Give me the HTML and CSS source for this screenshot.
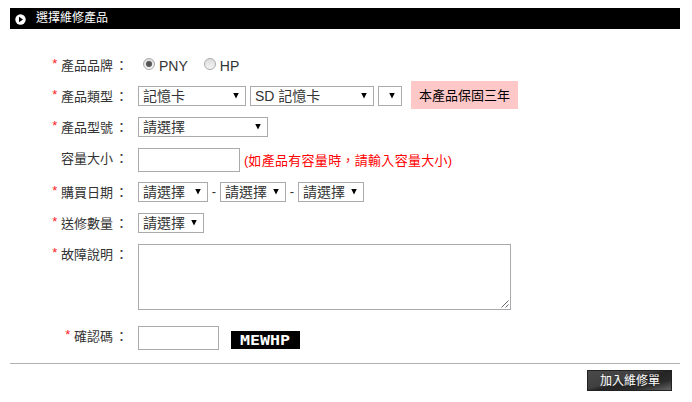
FILE: index.html
```html
<!DOCTYPE html>
<html lang="zh-Hant">
<head>
<meta charset="utf-8">
<title>選擇維修產品</title>
<link rel="stylesheet" href="styles.css">
</head>
<body>
<main class="panel">
  <h1 class="panel-title">
    <svg class="bullet" width="11" height="11" viewBox="0 0 11 11"><circle cx="5.5" cy="5.5" r="5.2" fill="#fff"/><path d="M4 2.8 8 5.5 4 8.2z" fill="#000"/></svg>
    選擇維修產品
  </h1>
  <form class="form">
    <div class="row">
      <div class="label"><span class="req">*</span> 產品品牌<span class="colon">：</span></div>
      <div class="field brands">
        <label class="option"><span class="radio checked"></span>PNY</label>
        <label class="option"><span class="radio"></span>HP</label>
      </div>
    </div>
    <div class="row">
      <div class="label"><span class="req">*</span> 產品類型<span class="colon">：</span></div>
      <div class="field">
        <div class="select w-type">記憶卡</div>
        <div class="select w-sub">SD 記憶卡</div>
        <div class="select w-empty"></div>
        <div class="warranty">本產品保固三年</div>
      </div>
    </div>
    <div class="row">
      <div class="label"><span class="req">*</span> 產品型號<span class="colon">：</span></div>
      <div class="field"><div class="select w-model">請選擇</div></div>
    </div>
    <div class="row row-capacity">
      <div class="label">容量大小<span class="colon">：</span></div>
      <div class="field"><input class="input w-capacity" type="text"><span class="note">(<span class="note-text">如產品有容量時，請輸入容量大小</span>)</span></div>
    </div>
    <div class="row">
      <div class="label"><span class="req">*</span> 購買日期<span class="colon">：</span></div>
      <div class="field dates">
        <div class="select w-year">請選擇</div><span class="dash">-</span>
        <div class="select w-pick">請選擇</div><span class="dash">-</span>
        <div class="select w-pick">請選擇</div>
      </div>
    </div>
    <div class="row">
      <div class="label"><span class="req">*</span> 送修數量<span class="colon">：</span></div>
      <div class="field"><div class="select w-pick">請選擇</div></div>
    </div>
    <div class="row row-desc">
      <div class="label"><span class="req">*</span> 故障說明<span class="colon">：</span></div>
      <div class="field desc">
        <textarea class="textarea"></textarea>
        <svg class="grip" width="8" height="8" viewBox="0 0 8 8"><path d="M.5 7.5l7-7M4.5 7.5l3-3" stroke="#666" stroke-width="1" fill="none"/></svg>
      </div>
    </div>
    <div class="row row-code">
      <div class="label"><span class="req">*</span> 確認碼<span class="colon">：</span></div>
      <div class="field"><input class="input w-code" type="text"><svg class="captcha" width="69" height="18" viewBox="0 0 69 18"><rect width="69" height="18" fill="#000"/><text x="9" y="14" textLength="50" lengthAdjust="spacingAndGlyphs">MEWHP</text></svg></div>
    </div>
  </form>
  <div class="actions"><button class="submit" type="button">加入維修單</button></div>
</main>
</body>
</html>
```
FILE: styles.css
```css
* { box-sizing: border-box; }
body {
  margin: 0;
  background: #fff;
  color: #333;
  font: 13px/20px "Liberation Sans", "Noto Sans CJK TC", sans-serif;
}
.panel { width: 670px; margin: 8px 0 0 10px; }
.panel-title {
  display: flex;
  align-items: center;
  gap: 10px;
  height: 21px;
  margin: 0;
  padding: 0 0 1px 5px;
  background: #000;
  color: #fff;
  font-size: 12px;
  font-weight: 400;
}
.bullet { margin-top: 2px; }
.form { padding-top: 20px; border-bottom: 1px solid #b0b0b0; }
.row {
  display: grid;
  grid-template-columns: 116px 1fr;
  column-gap: 12px;
  height: 31px;
  padding-top: 6px;
  align-items: start;
}
.row-capacity { height: 34px; }
.row-desc { height: 82px; }
.row-code { height: 43px; }
.label { text-align: right; white-space: nowrap; line-height: 22px; }
.req { color: #f22; position: relative; top: -2px; }
.colon { position: relative; left: 2px; }
.field { display: flex; align-items: flex-start; gap: 4px; }
.brands { gap: 16px; }
.option { display: flex; align-items: center; font-size: 14px; line-height: 22px; }
.radio {
  display: grid;
  place-items: center;
  width: 12px;
  height: 12px;
  margin: 0 4px 4px 5px;
  border: 1px solid #aaa;
  border-radius: 50%;
  background: linear-gradient(#ddd, #f4f4f4);
}
.brands .option + .option .radio { margin-left: 0; }
.checked::after {
  content: "";
  width: 6px;
  height: 6px;
  border-radius: 50%;
  background: #555;
}
.select {
  display: flex;
  justify-content: space-between;
  align-items: center;
  height: 20px;
  padding: 0 6px 0 4px;
  border: 1px solid #a9a9ae;
  background: #fff;
  font-size: 14px;
  line-height: 20px;
  white-space: nowrap;
}
.select::after {
  content: "";
  width: 6px;
  height: 6px;
  margin: 0 0 1px auto;
  background: #000;
  clip-path: polygon(0 0, 100% 0, 50% 100%);
}
.w-type { width: 108px; }
.w-sub { width: 124px; }
.w-empty { width: 24px; }
.w-model { width: 130px; }
.w-year { width: 70px; }
.w-pick { width: 66px; }
.w-capacity { width: 102px; }
.w-code { width: 81px; }
.warranty {
  width: 107px;
  height: 28px;
  margin: -5px 0 0 5px;
  padding-left: 8px;
  background: #ffc8c8;
  color: #000;
  line-height: 29px;
}
.input {
  height: 24px;
  margin: 0;
  padding: 0 4px;
  border: 1px solid #a9a9ae;
  background: #fff;
}
.note { color: #f00; line-height: 26px; white-space: nowrap; }
.note-text { letter-spacing: 0.3px; }
.dates { gap: 0; }
.dash { width: 12px; text-align: center; }
.desc { position: relative; width: 373px; }
.textarea {
  width: 373px;
  height: 66px;
  margin: 0;
  border: 1px solid #a9a9ae;
  background: #fff;
  resize: none;
}
.grip { position: absolute; right: 2px; bottom: 2px; }
.captcha { margin: 5px 0 0 8px; }
.captcha text { fill: #fff; font: 700 14px "DejaVu Sans Mono", monospace; }
.actions { display: flex; justify-content: flex-end; padding: 6px 8px 0 0; }
.submit {
  width: 85px;
  height: 21px;
  padding: 1px 0 0 1px;
  border: 1px solid #222;
  background: linear-gradient(165deg, #4a4a4a 0%, #404040 42%, #242424 52%, #2b2b2b 75%, #686868 100%);
  color: #fff;
  font: 12px/18px "Liberation Sans", "Noto Sans CJK TC", sans-serif;
}
```
